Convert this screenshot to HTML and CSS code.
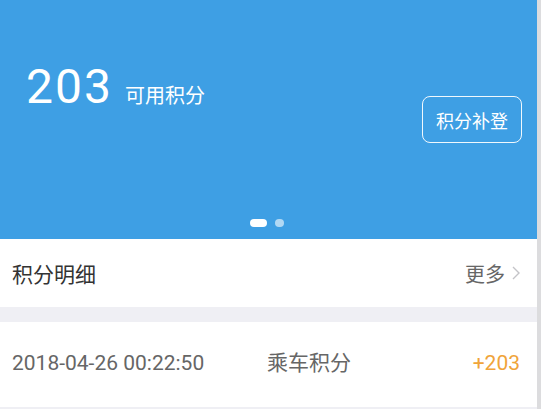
FILE: index.html
```html
<!DOCTYPE html>
<html lang="zh-CN">
<head>
<meta charset="utf-8">
<title>积分</title>
<link rel="stylesheet" href="styles.css">
</head>
<body>
<div class="page">
  <section class="banner">
    <div class="top">
      <div class="points"><span class="num">203</span><span class="label">可用积分</span></div>
      <div class="btn">积分补登</div>
    </div>
    <div class="dots"><span class="dot active"></span><span class="dot"></span></div>
  </section>
  <div class="header">
    <span class="title">积分明细</span>
    <span class="more">更多<svg class="chev" width="8" height="14" viewBox="0 0 8 14"><polyline points="1,1 7,7 1,13" fill="none" stroke="#c4c4c8" stroke-width="1.4"/></svg></span>
  </div>
  <div class="gap"></div>
  <div class="record">
    <span class="date">2018-04-26 00:22:50</span>
    <span class="type">乘车积分</span>
    <span class="amount">+203</span>
  </div>
</div>
</body>
</html>
```

FILE: styles.css
```css
html, body {
  margin: 0;
  padding: 0;
  background: #dcdcde;
}
body {
  font-family: Roboto, "Noto Sans CJK SC", sans-serif;
}
.page {
  width: 537px;
  min-height: 409px;
  background: #efeff4;
}
.banner {
  height: 239px;
  box-sizing: border-box;
  background: #3e9fe4;
  padding: 63px 15px 12px 26px;
  display: flex;
  flex-direction: column;
  color: #fff;
}
.top {
  display: flex;
  justify-content: space-between;
  align-items: flex-start;
}
.points {
  display: flex;
  align-items: baseline;
  line-height: 48px;
}
.num {
  font-size: 48px;
  letter-spacing: 2px;
  font-family: Roboto, sans-serif;
}
.label {
  font-size: 20px;
  margin-left: 12px;
  font-family: "Noto Sans CJK SC", sans-serif;
}
.btn {
  margin-top: 33px;
  width: 100px;
  height: 47px;
  box-sizing: border-box;
  border: 1.5px solid rgba(255,255,255,0.92);
  border-radius: 8px;
  display: flex;
  align-items: center;
  justify-content: center;
  font-size: 18px;
  font-family: "Noto Sans CJK SC", sans-serif;
}
.dots {
  margin-top: auto;
  display: flex;
  justify-content: center;
  gap: 8px;
  padding-right: 14px;
}
.dot {
  width: 9px;
  height: 8px;
  border-radius: 4px;
  background: rgba(255,255,255,0.6);
}
.dot.active {
  width: 17px;
  background: #fff;
}
.header {
  height: 68px;
  background: #fff;
  display: flex;
  align-items: center;
  justify-content: space-between;
  padding: 0 17px 0 12px;
}
.title {
  font-size: 21px;
  color: #333;
  font-family: "Noto Sans CJK SC", sans-serif;
}
.more {
  display: flex;
  align-items: center;
  font-size: 20px;
  color: #666;
  font-family: "Noto Sans CJK SC", sans-serif;
}
.chev {
  margin-left: 7px;
}
.gap {
  height: 15px;
}
.record {
  height: 85px;
  box-sizing: border-box;
  padding: 0 17px 6px 12px;
  background: #fff;
  display: flex;
  align-items: baseline;
  font-size: 21px;
  line-height: 79px;
  color: #666;
}
.date {
  width: 255px;
  flex: none;
}
.type {
  font-family: "Noto Sans CJK SC", sans-serif;
}
.amount {
  margin-left: auto;
  color: #f0a43a;
}
```
